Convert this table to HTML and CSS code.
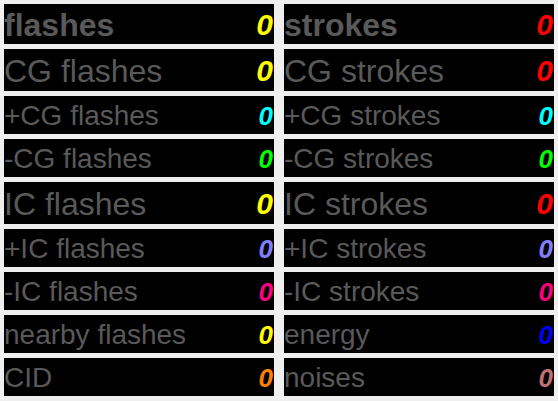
FILE: index.html
```html
<!DOCTYPE html>
<html>
<head>
<meta charset="utf-8">
<link rel="stylesheet" href="styles.css">
</head>
<body>
<div class="board">
  <div class="col">
    <div class="row head"><span class="label">flashes</span><span class="num yellow">0</span></div>
    <div class="row big"><span class="label">CG flashes</span><span class="num yellow">0</span></div>
    <div class="row small"><span class="label">+CG flashes</span><span class="num cyan">0</span></div>
    <div class="row small"><span class="label">-CG flashes</span><span class="num green">0</span></div>
    <div class="row big"><span class="label">IC flashes</span><span class="num yellow">0</span></div>
    <div class="row small"><span class="label">+IC flashes</span><span class="num lilac">0</span></div>
    <div class="row small"><span class="label">-IC flashes</span><span class="num pink">0</span></div>
    <div class="row small"><span class="label">nearby flashes</span><span class="num yellow">0</span></div>
    <div class="row small"><span class="label">CID</span><span class="num orange">0</span></div>
  </div>
  <div class="col">
    <div class="row head"><span class="label">strokes</span><span class="num red">0</span></div>
    <div class="row big"><span class="label">CG strokes</span><span class="num red">0</span></div>
    <div class="row small"><span class="label">+CG strokes</span><span class="num cyan">0</span></div>
    <div class="row small"><span class="label">-CG strokes</span><span class="num green">0</span></div>
    <div class="row big"><span class="label">IC strokes</span><span class="num red">0</span></div>
    <div class="row small"><span class="label">+IC strokes</span><span class="num lilac">0</span></div>
    <div class="row small"><span class="label">-IC strokes</span><span class="num pink">0</span></div>
    <div class="row small"><span class="label">energy</span><span class="num blue">0</span></div>
    <div class="row small"><span class="label">noises</span><span class="num rose">0</span></div>
  </div>
</div>
</body>
</html>
```

FILE: styles.css
```css
html, body {
  margin: 0;
  padding: 0;
  background: #efefef;
}
body {
  padding: 4px;
  font-family: "Liberation Sans", Arial, sans-serif;
}
.board {
  display: grid;
  grid-template-columns: 270px 270px;
  column-gap: 10px;
}
.col {
  display: flex;
  flex-direction: column;
  gap: 5px;
}
.row {
  background: #000;
  display: flex;
  justify-content: space-between;
  align-items: center;
  color: #595959;
  overflow: hidden;
  white-space: nowrap;
}
.head {
  height: 40px;
  font-size: 32px;
  font-weight: bold;
}
.big {
  height: 42px;
  font-size: 32px;
}
.small {
  height: 38px;
  font-size: 28px;
}
.label {
  line-height: 1;
  padding-top: 2px;
}
.num {
  font-weight: bold;
  font-style: italic;
  line-height: 1;
  padding-top: 2px;
  padding-right: 1px;
}
.head .num, .big .num { font-size: 30px; }
.small .num { font-size: 26px; }
.yellow { color: #ffff00; }
.red { color: #ff0000; }
.cyan { color: #00ffff; }
.green { color: #00ff00; }
.lilac { color: #8080ff; }
.pink { color: #ff0080; }
.blue { color: #0000ff; }
.orange { color: #ff8000; }
.rose { color: #c07070; }
```
